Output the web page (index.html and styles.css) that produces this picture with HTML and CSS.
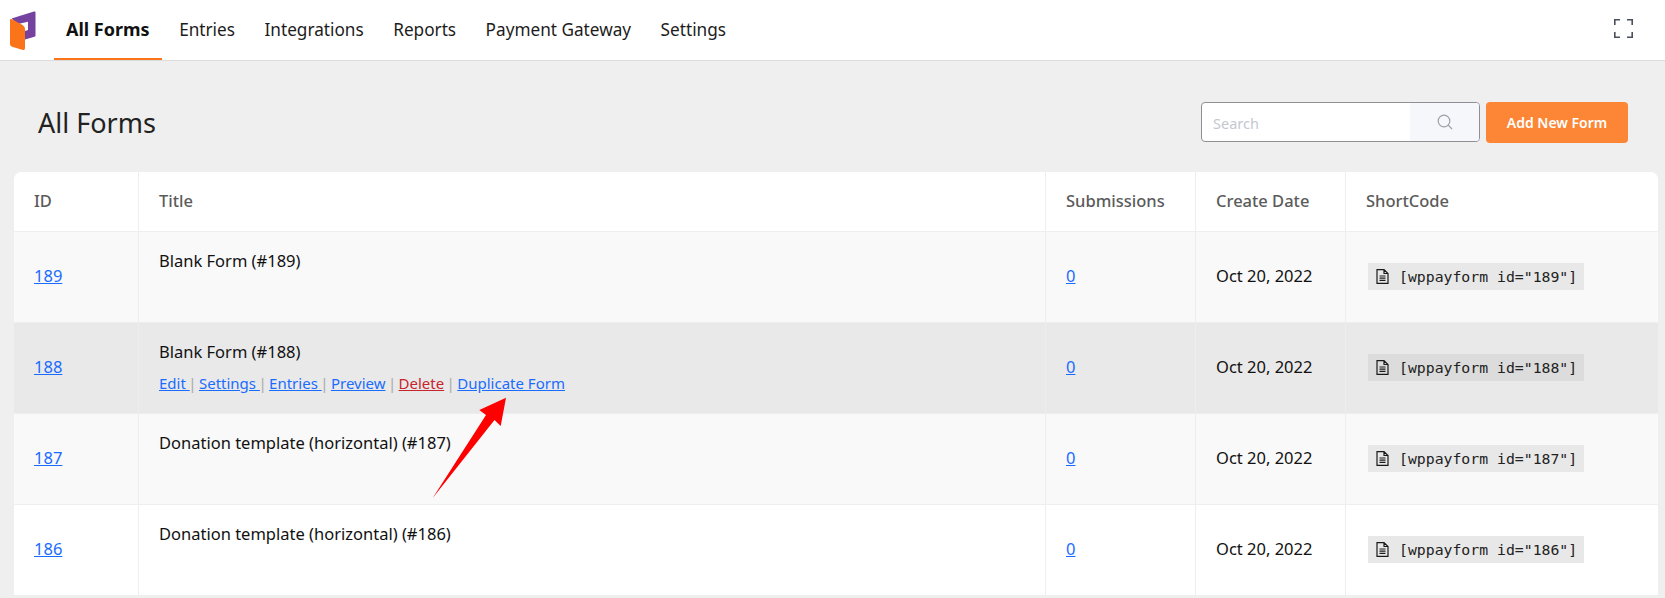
FILE: index.html
```html
<!DOCTYPE html>
<html lang="en">
<head>
<meta charset="utf-8">
<title>All Forms</title>
<link rel="stylesheet" href="styles.css">
</head>
<body>
<header class="topbar">
  <svg class="logo" width="28" height="42" viewBox="0 0 28 42">
    <path fill="#7542a0" d="M1.500 8.500 L24 1.500 Q25.500 1 25.500 2.500 L25.500 25.500 Q25.500 26.500 24.500 26.800 L15 29.500 L15 21 L18 20 L18 11.700 L8 14 Z"/>
    <path fill="#fb7419" d="M0 10 Q0 8.500 2 9.300 L12.500 15 Q15 16.500 15 19 L15 38 Q15 40.500 13 40 L2 36.800 Q0 36 0 34 Z"/>
  </svg>
  <nav class="nav">
    <a class="nav-item active">All Forms</a>
    <a class="nav-item">Entries</a>
    <a class="nav-item">Integrations</a>
    <a class="nav-item">Reports</a>
    <a class="nav-item">Payment Gateway</a>
    <a class="nav-item">Settings</a>
  </nav>
  <svg class="fullscreen" width="19" height="19" viewBox="0 0 19 19" fill="none" stroke="#4a4f5c" stroke-width="1.600">
    <path d="M.8 6V.8H6M13 .8H18.200V6M18.200 13V18.200H13M6 18.200H.8V13"/>
  </svg>
</header>
<main class="page">
  <div class="page-head">
    <h1 class="page-title">All Forms</h1>
    <div class="actions">
      <div class="search">
        <span class="search-input">Search</span>
        <span class="search-btn">
          <svg width="16" height="16" viewBox="0 0 16 16" fill="none" stroke="#9aa0a8" stroke-width="1.200"><circle cx="7" cy="7" r="5.800"/><path d="M11.200 11.200L15 15"/></svg>
        </span>
      </div>
      <button class="add-btn">Add New Form</button>
    </div>
  </div>
  <div class="table">
    <div class="row head">
      <div class="cell">ID</div>
      <div class="cell">Title</div>
      <div class="cell">Submissions</div>
      <div class="cell">Create Date</div>
      <div class="cell">ShortCode</div>
    </div>
    <div class="row odd">
      <div class="cell mid"><a class="link">189</a></div>
      <div class="cell title"><div class="name">Blank Form (#189)</div></div>
      <div class="cell mid"><a class="link">0</a></div>
      <div class="cell mid">Oct 20, 2022</div>
      <div class="cell mid"><code class="code"><svg class="doc" width="13" height="15" viewBox="0 0 13 15" fill="none" stroke="#1a1a1a" stroke-width="1.200"><path d="M1 .6H8L12 4.500V14.400H1ZM8 .6V4.500H12M3.500 7H9.500M3.500 9.200H9.500M3.500 11.400H9.500"/></svg>[wppayform id="189"]</code></div>
    </div>
    <div class="row hover">
      <div class="cell mid"><a class="link">188</a></div>
      <div class="cell title">
        <div class="name">Blank Form (#188)</div>
        <div class="row-actions"><a class="link">Edit </a><span class="sep">|</span> <a class="link">Settings </a><span class="sep">|</span> <a class="link">Entries </a><span class="sep">|</span> <a class="link">Preview</a> <span class="sep">|</span> <a class="link danger">Delete</a> <span class="sep">|</span> <a class="link">Duplicate Form</a></div>
      </div>
      <div class="cell mid"><a class="link">0</a></div>
      <div class="cell mid">Oct 20, 2022</div>
      <div class="cell mid"><code class="code"><svg class="doc" width="13" height="15" viewBox="0 0 13 15" fill="none" stroke="#1a1a1a" stroke-width="1.200"><path d="M1 .6H8L12 4.500V14.400H1ZM8 .6V4.500H12M3.500 7H9.500M3.500 9.200H9.500M3.500 11.400H9.500"/></svg>[wppayform id="188"]</code></div>
    </div>
    <div class="row odd">
      <div class="cell mid"><a class="link">187</a></div>
      <div class="cell title"><div class="name">Donation template (horizontal) (#187)</div></div>
      <div class="cell mid"><a class="link">0</a></div>
      <div class="cell mid">Oct 20, 2022</div>
      <div class="cell mid"><code class="code"><svg class="doc" width="13" height="15" viewBox="0 0 13 15" fill="none" stroke="#1a1a1a" stroke-width="1.200"><path d="M1 .6H8L12 4.500V14.400H1ZM8 .6V4.500H12M3.500 7H9.500M3.500 9.200H9.500M3.500 11.400H9.500"/></svg>[wppayform id="187"]</code></div>
    </div>
    <div class="row even">
      <div class="cell mid"><a class="link">186</a></div>
      <div class="cell title"><div class="name">Donation template (horizontal) (#186)</div></div>
      <div class="cell mid"><a class="link">0</a></div>
      <div class="cell mid">Oct 20, 2022</div>
      <div class="cell mid"><code class="code"><svg class="doc" width="13" height="15" viewBox="0 0 13 15" fill="none" stroke="#1a1a1a" stroke-width="1.200"><path d="M1 .6H8L12 4.500V14.400H1ZM8 .6V4.500H12M3.500 7H9.500M3.500 9.200H9.500M3.500 11.400H9.500"/></svg>[wppayform id="186"]</code></div>
    </div>
  </div>
</main>
<svg class="arrow" width="80" height="110" viewBox="0 0 80 110"><path fill="#ff0000" d="M.7 105 L54 22 L47.300 17 L74 4.700 L68.700 33 L62.500 27 Z"/></svg>
</body>
</html>
```
FILE: styles.css
```css
* { box-sizing: border-box; }
html, body { margin: 0; height: 598px; overflow: hidden; }
body {
  background: #efefef;
  font-family: "Noto Sans", "Open Sans", sans-serif;
  font-size: 16.500px;
  color: #111;
  position: relative;
}
.topbar {
  height: 61px;
  background: #fff;
  border-bottom: 1px solid #dcdcdc;
  display: flex;
  align-items: flex-start;
  padding-left: 10px;
}
.logo { margin-top: 10px; flex: none; }
.nav { display: flex; margin-left: 16px; }
.nav-item {
  height: 60px;
  padding: 0 12px;
  margin-right: 5.500px;
  display: flex;
  align-items: center;
  font-size: 17.200px;
  color: #1c1c1c;
  border-bottom: 2px solid transparent;
}
.nav-item.active { font-weight: 700; font-size: 18px; color: #111; border-bottom-color: #fb7419; }
.fullscreen { margin: 19px 32px 0 auto; }
.page { padding: 0 7px 0 14px; }
.page-head {
  height: 111px;
  display: flex;
  justify-content: space-between;
  align-items: flex-start;
  padding: 41px 30px 0 24px;
}
.page-title { margin: 0; font-size: 27px; font-weight: 400; line-height: 42px; color: #222; }
.actions { display: flex; gap: 6px; }
.search {
  width: 279px;
  height: 40px;
  border: 1px solid #8f8f94;
  border-radius: 4px;
  background: #fff;
  display: flex;
  overflow: hidden;
}
.search-input { flex: 1; padding-left: 11px; line-height: 40px; font-size: 14.500px; color: #c4c8d0; }
.search-btn { width: 69px; background: #f5f7fa; display: flex; align-items: center; justify-content: center; }
.add-btn {
  width: 142px;
  height: 41px;
  border: 0;
  border-radius: 4px;
  background: #fc8635;
  color: #fff;
  font: 600 14px "Noto Sans", sans-serif;
}
.table { background: #fff; border-radius: 8px 8px 0 0; overflow: hidden; }
.row {
  display: grid;
  grid-template-columns: 125px 907px 150px 150px 1fr;
  height: 91px;
  border-bottom: 1px solid #eeeeee;
}
.row.head { height: 60px; color: #5b5b5b; font-weight: 500; background: #fff; }
.row.head .cell { padding-bottom: 2px; }
.row.odd { background: #f9f9f9; }
.row.even { background: #fff; }
.row.hover { background: #e9e9e9; }
.cell { padding: 0 20px; border-right: 1px solid #eeeeee; display: flex; align-items: center; }
.cell.mid { padding-bottom: 3px; }
.cell:last-child { border-right: 0; }
.cell.title { flex-direction: column; align-items: flex-start; justify-content: flex-start; padding-top: 18px; }
.name { line-height: 22px; }
.row-actions { margin-top: 11px; font-size: 15px; line-height: 19px; color: #aaa; white-space: pre-wrap; }
.link { color: #1a6cff; text-decoration: underline; }
.danger { color: #c8242b; }
.sep { color: #aaa; margin: 0 -1.500px; }
.code {
  display: inline-flex;
  align-items: center;
  height: 27px;
  width: 216px;
  padding: 0 0 0 8px;
  margin: 2px 0 0 2px;
  background: #e8e8e8;
  font-family: "DejaVu Sans Mono", monospace;
  font-size: 14.800px;
  color: #222;
}
.hover .code { background: #dcdcdc; }
.doc { margin-right: 10px; flex: none; }
.arrow { position: absolute; left: 432px; top: 393px; }
```
